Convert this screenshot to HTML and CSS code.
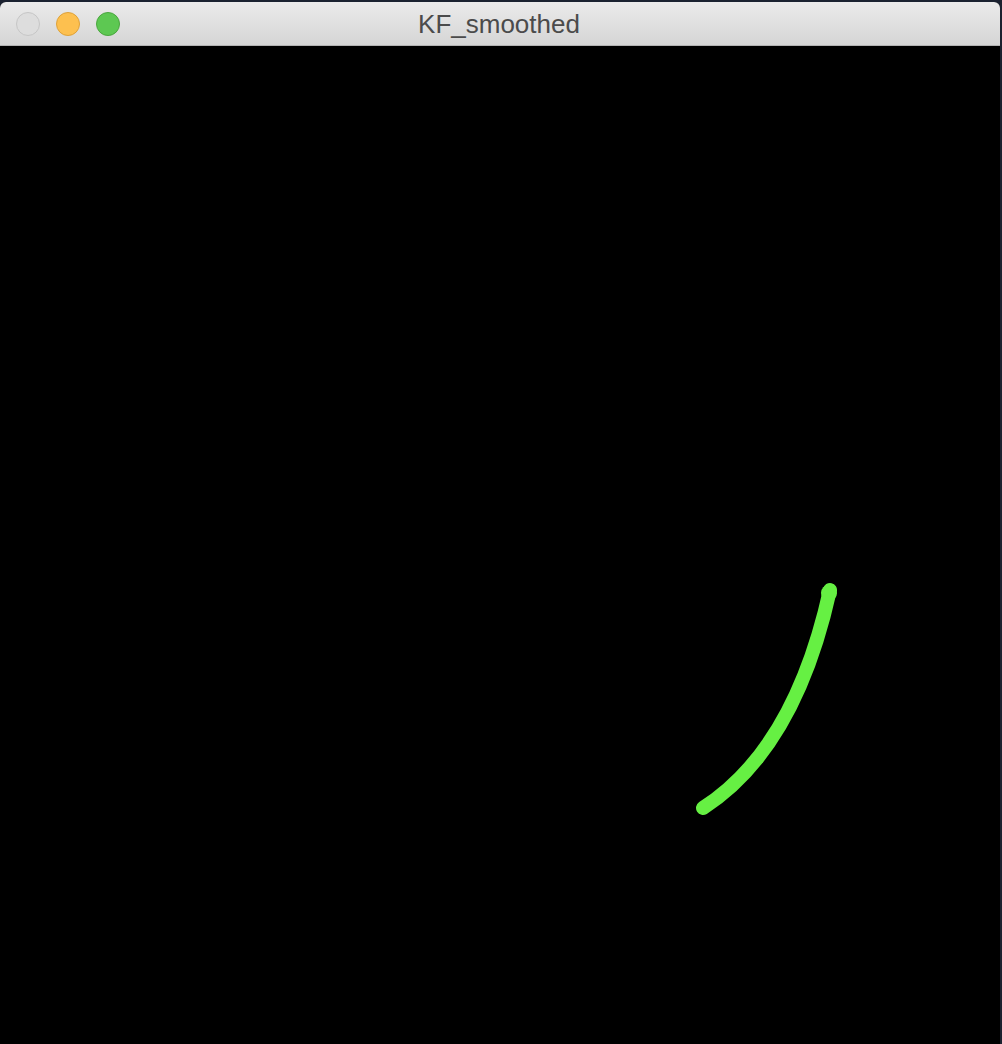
FILE: index.html
```html
<!DOCTYPE html>
<html>
<head>
<meta charset="utf-8">
<title>KF_smoothed</title>
<link rel="stylesheet" href="styles.css">
</head>
<body>
<div class="window">
  <div class="titlebar">
    <div class="lights">
      <span class="light close"></span>
      <span class="light min"></span>
      <span class="light max"></span>
    </div>
    <div class="title">KF_smoothed</div>
  </div>
  <div class="content">
    <svg class="plot" width="1000" height="998" viewBox="0 0 1000 998">
      <path d="M703 762 C745 735 800 680 830 544" fill="none" stroke="#66f043" stroke-width="14" stroke-linecap="round"/>
      <circle cx="829" cy="547" r="8" fill="#66f043"/>
    </svg>
  </div>
</div>
</body>
</html>
```
FILE: styles.css
```css
html, body {
  margin: 0;
  padding: 0;
}
body {
  background: #1b2230;
  width: 1002px;
  height: 1044px;
  overflow: hidden;
  padding-top: 2px;
  box-sizing: border-box;
}
.window {
  width: 1000px;
  height: 1042px;
  border-radius: 6px 6px 0 0;
  overflow: hidden;
  display: flex;
  flex-direction: column;
  background: #000;
}
.titlebar {
  height: 43px;
  flex: none;
  position: relative;
  background: linear-gradient(#ebebeb, #d5d5d5);
  border-bottom: 1px solid #b3b3b3;
  display: flex;
  align-items: center;
  justify-content: center;
}
.lights {
  position: absolute;
  left: 16px;
  top: 10px;
  display: flex;
  gap: 16px;
}
.light {
  width: 24px;
  height: 24px;
  border-radius: 50%;
  box-sizing: border-box;
}
.close { background: #dddddd; border: 1px solid #c6c6c6; }
.min { background: #fdc04f; border: 1px solid #dea23a; }
.max { background: #5dc852; border: 1px solid #4aa63e; }
.title {
  font-family: "Liberation Sans", Arial, sans-serif;
  font-size: 26px;
  color: #4b4b4b;
  margin-left: -2px;
  margin-top: 2px;
}
.content {
  flex: 1;
  background: #000;
  position: relative;
}
.plot {
  display: block;
}
```
